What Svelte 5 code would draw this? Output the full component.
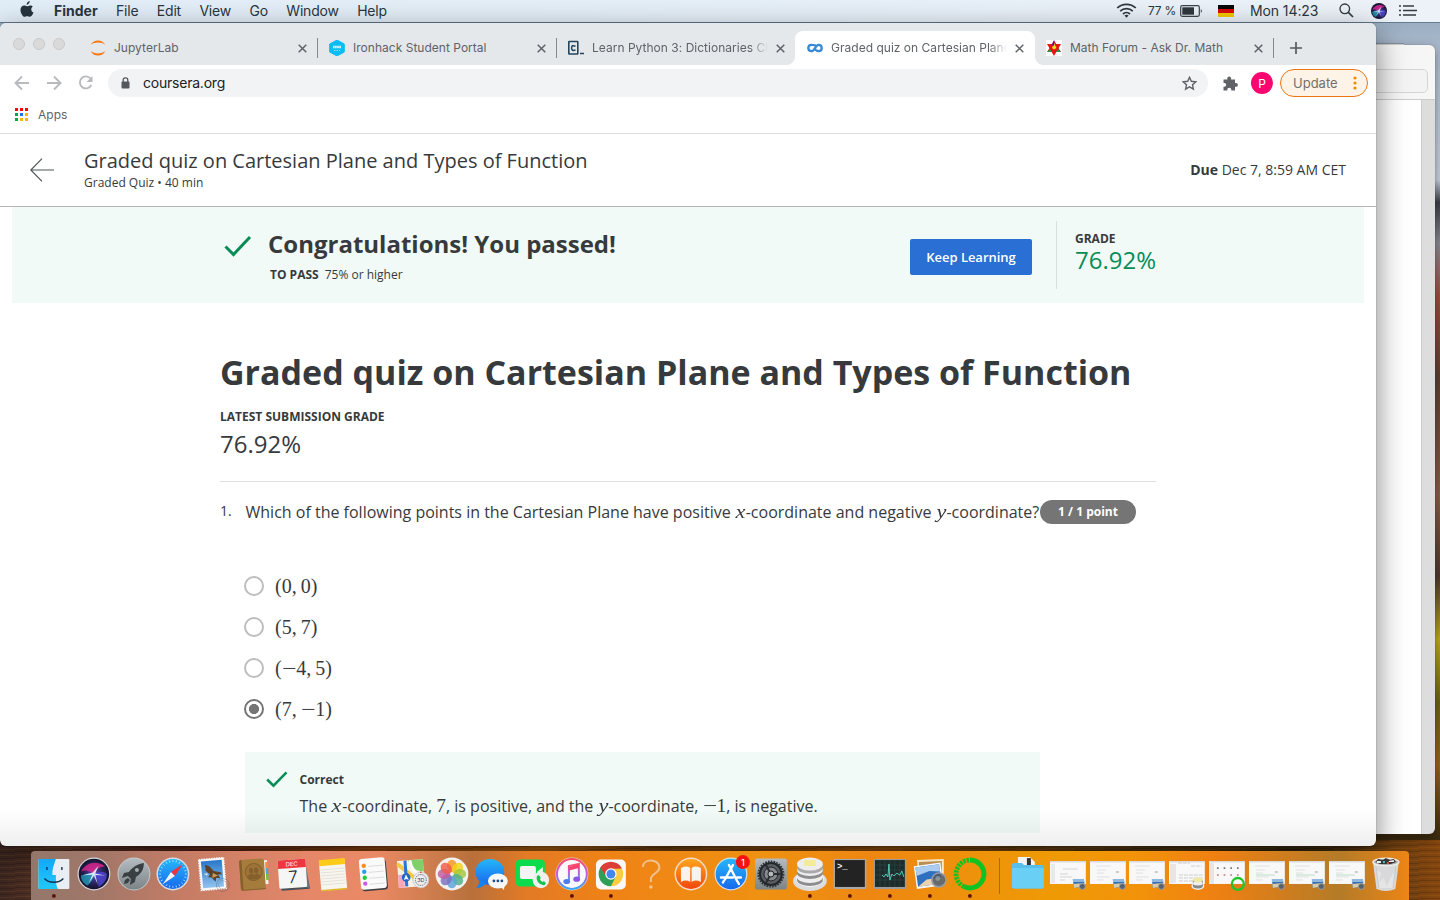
<script>
  const menus = ['File', 'Edit', 'View', 'Go', 'Window', 'Help'];
  const tabs = [
    { icon: 'jupyter', title: 'JupyterLab', sep: true },
    { icon: 'iron', title: 'Ironhack Student Portal', sep: true },
    { icon: 'code', title: 'Learn Python 3: Dictionaries Ch', fade: true },
    { icon: 'coursera', title: 'Graded quiz on Cartesian Plane', fade: true, active: true },
    { icon: 'math', title: 'Math Forum - Ask Dr. Math', sep: true }
  ];
  const options = [
    { x: '0', y: '0' },
    { x: '5', y: '7' },
    { x: '4', y: '5', negX: true },
    { x: '7', y: '1', negY: true, checked: true }
  ];
  const apps = [
    ['finder', 1], ['siri', 0], ['launchpad', 0], ['safari', 0], ['mail', 0], ['contacts', 0],
    ['calendar', 0], ['notes', 0], ['reminders', 0], ['maps', 0], ['photos', 0], ['messages', 0],
    ['facetime', 0], ['itunes', 1], ['chrome', 1], ['missing', 0], ['books', 0], ['appstore', 0],
    ['settings', 0], ['sequel', 1], ['terminal', 1], ['activity', 1], ['preview', 1], ['ring', 1]
  ];
  const places = ['folder', 'w1', 'w2', 'w3', 'w4', 'w5', 'w6', 'w7', 'w8', 'trash'];
  const petals = ['#f7941d', '#f4d313', '#a5c73b', '#4fb08a', '#5ba3d9', '#7d6fc0', '#c25ba0', '#ee5a4a'];
  const ticks = Array.from({ length: 24 }, (_, i) => i * 15);
  const swatches = ['#f00', '#f00', '#f00', '#00a651', '#1a73e8', '#fbb400', '#00a651', '#fbb400', '#fbb400'];
</script>

{#snippet siriOrb(r)}
  <circle {r} fill="url(#siriBase)" />
  <path d="M-.85-.15C-.5-.8 .2-.9 .75-.5C.3-.5 .1-.2 0 0C-.3-.2-.6-.3-.85-.15Z" fill="#f0268f" opacity=".75" transform="scale({r})" />
  <path d="M-.85 .1C-.5 .0-.2 0 0 0C0 .3-.3 .7-.45 .75C-.7 .6-.85 .4-.85 .1Z" fill="#1fb7c9" opacity=".65" transform="scale({r})" />
  <path d="M0 0C.3-.15 .7-.2 .85 0C.85 .4 .6 .7 .3 .85C.3 .5 .2 .2 0 0Z" fill="#5046d8" opacity=".8" transform="scale({r})" />
  <path d="M-.75 .08L-.08-.1L.3-.55L.09-.03L.75 .1L.1 .07L.26 .7L0 .12L-.35 .6L-.1 .05Z" fill="#eafcff" opacity=".85" transform="scale({r})" />
{/snippet}

{#snippet previewBadge()}
  <path d="M5 5H16L17 12L6 14Z" fill="#3b6fb0" /><path d="M5.500 10L17 9V12L6 14Z" fill="#d9cba8" /><path d="M5 5H16L16.500 8L5 8Z" fill="#8fb8e0" />
  <circle cx="14.500" cy="12.500" r="3" fill="#59626b" stroke="#9aa0a8" stroke-width="1" />
{/snippet}

{#snippet dockIcon(name)}
  {#if name === 'finder'}
    <rect x="-15.5" y="-15" width="31" height="30" rx="1" fill="#e9eef5" />
    <path d="M-15.5-15H2C0-9-2-4-1.500 1H2V6C2 10 3 13 4 15H-15.500Z" fill="url(#finderBlue)" />
    <path d="M-7-7V-4M8-7V-4" stroke="#12324c" stroke-width="1.400" />
    <path d="M-9.500 4.500C-5 9.500 5 9.500 9.500 4.500" fill="none" stroke="#12324c" stroke-width="1.400" />
  {:else if name === 'siri'}
    <circle r="16.500" fill="#d8d8dc" />
    {@render siriOrb(15.3)}
  {:else if name === 'launchpad'}
    <circle r="16.500" fill="#c3c9cb" /><circle r="15.500" fill="url(#steel)" />
    <path d="M10-11C3-10-2-6-5-2L-10-1L-12 4L-6 2L-3 5L-4 11L1 8L2 3C7 0 10-4 10-11Z" fill="#3a3f42" />
    <circle cx="3" cy="-4" r="2" fill="#a5adb0" /><path d="M-6 4L-9 6L-10 10L-6 9L-4 6Z" fill="#3a3f42" />
  {:else if name === 'safari'}
    <circle r="16.500" fill="#d9dde0" /><circle r="15" fill="url(#blueDown)" />
    {#each ticks as t}<path d="M0-14V-12" stroke="#d8efff" stroke-width=".7" transform="rotate({t})" />{/each}
    <path d="M10-10L2 2L-2-2Z" fill="#f0303c" /><path d="M-10 10L2 2L-2-2Z" fill="#f3f3f3" />
  {:else if name === 'mail'}
    <g transform="rotate(-5)"><rect x="-13" y="-15.500" width="25" height="31" fill="#f8f8f8" stroke="#f8f8f8" stroke-width="1.500" stroke-dasharray="1.500 1" /><rect x="-11" y="-13.500" width="21" height="27" fill="url(#mailSky)" />
      <path d="M-7-10L-3-8L1-3L8-1L9 1L5 1L7 5L3 4L2 8L-2 3L-5 3L-3 0L-7-4Z" fill="#5c4028" /><path d="M0-1L5 2L-1 4Z" fill="#c99a55" /><path d="M-9-1L-5-1L-6 1Z" fill="#f4efe2" /></g>
    <circle cx="10" cy="11" r="6.500" fill="none" stroke="#4b4b55" stroke-width=".7" opacity=".45" /><circle cx="10" cy="11" r="4.300" fill="none" stroke="#4b4b55" stroke-width=".6" opacity=".4" />
  {:else if name === 'contacts'}
    <g transform="rotate(-4)"><path d="M10-13H15V11H10Z" fill="#f2efe4" /><path d="M13-11H15.500V-5H13Z" fill="#f08a3c" /><path d="M13-5H15.500V1H13Z" fill="#46a6d8" /><path d="M13 1H15.500V7H13Z" fill="#6fbf4b" />
      <rect x="-13" y="-15" width="25" height="31" rx="2" fill="#a67c3d" /><path d="M-13-13V14Q-13 16-11 16H12V15H-10.500V-15H-11Q-13-15-13-13Z" fill="#86602c" />
      <circle cx="1" cy="-2" r="8.500" fill="#9d7438" stroke="#86602c" /><ellipse cx="-1.500" cy="-3.500" rx="2.200" ry="3" fill="#86602c" /><ellipse cx="3.500" cy="-3.500" rx="2.200" ry="3" fill="#86602c" /><path d="M-6 3Q-5 0-1.500 0T1.500 2Q1.500 0 4 0T8 3L5 5.500H-3Z" fill="#86602c" /></g>
  {:else if name === 'calendar'}
    <g transform="rotate(-4)"><path d="M-14 12L-12 16H16L15 8Z" fill="#4c5056" /><path d="M13-13L16 15H13Z" fill="#6b7078" /><rect x="-14.500" y="-14.500" width="28" height="28.500" rx="1.500" fill="#f6f6f6" /><path d="M-14.500-6V-13Q-14.500-14.500-13-14.500H12Q13.500-14.500 13.500-13V-6Z" fill="#ee3640" />
      <text x="-.5" y="-8" font-size="6" fill="#fff" text-anchor="middle">DEC</text><text x="0" y="9" font-size="17" fill="#222" text-anchor="middle" font-weight="300">7</text></g>
  {:else if name === 'notes'}
    <g transform="rotate(-5)"><rect x="-13" y="-14" width="26" height="30" rx="1" fill="#f7f5ee" /><path d="M-13-15H13V-9H-13Z" fill="#fccb18" /><path d="M-12-5H12M-12-2H12M-12 1H12M-12 4H12M-12 7H12M-12 10H12" stroke="#d8d5cc" stroke-width=".6" /><path d="M-13 15H13V16.500H-13Z" fill="#e3b62b" /></g>
  {:else if name === 'reminders'}
    <g transform="rotate(-5)"><rect x="-12" y="-14" width="26" height="30.500" rx="3" fill="#3e3e40" /><rect x="-13" y="-16" width="26" height="31" rx="3" fill="#fafafa" />
      <circle cx="-8.500" cy="-9" r="2.200" fill="#ff8a1c" /><circle cx="-8.500" cy="-3" r="2.200" fill="#2c9cf2" /><circle cx="-8.500" cy="3" r="2.200" fill="#23cc3b" /><circle cx="-8.500" cy="9" r="2.200" fill="#c95be0" />
      <path d="M-4-8H11M-4-2H11M-4 4H11M-4 10H11" stroke="#c9c9c9" stroke-width=".6" /></g>
  {:else if name === 'maps'}
    <g transform="rotate(-4)"><path d="M-14-14H12V13H-14Z" fill="#f5f1e4" /><path d="M-3-14H12V-2C5-2 0-6-3-14Z" fill="#7fcf6b" /><path d="M-14 0H-8V13H-14Z" fill="#f5a7be" /><path d="M-14-11L12 13" stroke="#f8c83e" stroke-width="4" /><path d="M-1-14C0-4 5 1 12 3" fill="none" stroke="#fff" stroke-width="2.500" /><path d="M-6-14V12" stroke="#2b73d9" stroke-width="3" /><circle cx="-6" cy="3" r="4.300" fill="#2264c8" /><path d="M-6 0L-3.500 5.500L-6 4.500L-8.500 5.500Z" fill="#fff" /></g>
    <circle cx="9" cy="6" r="8" fill="#ececec" stroke="#bbb" stroke-width=".6" /><circle cx="9" cy="6" r="5.500" fill="none" stroke="#557" stroke-dasharray="1 1" /><text x="9" y="8" font-size="5.500" text-anchor="middle" fill="#444">3D</text><path d="M8-1L9-3L10-1Z" fill="#e33" />
  {:else if name === 'photos'}
    <circle r="16.500" fill="#f2f2f0" />
    {#each petals as c, i}<ellipse cx="0" cy="-8" rx="5" ry="6.300" fill={c} opacity=".82" transform="rotate({i * 45})" />{/each}
  {:else if name === 'messages'}
    <ellipse cx="-2" cy="-2" rx="14.500" ry="13" fill="url(#blueDown)" /><path d="M-13 5Q-12 11-16 14Q-9 14-6 9Z" fill="#1483ef" />
    <ellipse cx="6" cy="7" rx="10" ry="7.500" fill="#f7f7f7" /><path d="M8 12L12 16L13 10Z" fill="#f7f7f7" /><circle cx="2" cy="7" r="1.400" fill="#1c4f8c" /><circle cx="6" cy="7" r="1.400" fill="#1c4f8c" /><circle cx="10" cy="7" r="1.400" fill="#1c4f8c" />
  {:else if name === 'facetime'}
    <rect x="-16" y="-14.500" width="29" height="27" rx="4" fill="#0bdc4d" /><rect x="-12" y="-8" width="16" height="13" rx="2" fill="#f4f4f4" /><path d="M5-2L11-7V5Z" fill="#e8f8e8" />
    <circle cx="9" cy="6" r="8.300" fill="#f0f0f0" /><path d="M5 2L7 1L9 4L8 5Q9 8 11 8L12 7L14 9L13 11Q9 12 6 8Q4 5 5 2Z" fill="#17c34a" />
  {:else if name === 'itunes'}
    <circle r="16.500" fill="#ddd" /><circle r="15" fill="#fbf8fb" stroke="url(#rainbow)" stroke-width="2" />
    <path d="M-3 7V-8L7-10V5" fill="none" stroke="url(#rainbow)" stroke-width="2" /><path d="M-3-7L7-9.500V-6L-3-3.500Z" fill="#f4426c" /><ellipse cx="-5.200" cy="7.500" rx="3.400" ry="2.600" fill="#4f7cf0" /><ellipse cx="4.800" cy="5.200" rx="3.400" ry="2.600" fill="#8d55e4" />
  {:else if name === 'chrome'}
    <rect x="-15" y="-14.500" width="30" height="30" rx="5" fill="#f8f8f8" />
    <path d="M0 0L-10.700-6.200A12.400 12.400 0 0 1 10.700-6.200Z" fill="#dc3f37" /><path d="M0 0L10.700-6.200A12.400 12.400 0 0 1 0 12.400Z" fill="#fccc3f" /><path d="M0 0V12.400A12.400 12.400 0 0 1-10.700-6.200Z" fill="#2f9e58" /><path d="M0-5.600H11L10.700-6.200L4.800 2.800L0 12.400Z" fill="#fccc3f" /><path d="M-10.700-6.200L-4.800 2.800L4.800 2.800L0 12.400Z" fill="#2f9e58" /><path d="M-10.700-6.200L-5 2L0-5.600H11L7-10H-7Z" fill="#dc3f37" /><circle r="5.700" fill="#fff" /><circle r="4.500" fill="#4386f0" />
  {:else if name === 'missing'}
    <path d="M-8-7C-8-11-4.500-13.500 0-13.500S8.500-11 8.500-6.500C8.500-1 0 0 0 5V8" fill="none" stroke="#f1c391" stroke-width="2" /><circle cy="13" r="1.700" fill="#f1c391" />
  {:else if name === 'books'}
    <circle r="16.500" fill="#f3dcc6" /><circle r="15" fill="url(#orangeDown)" /><path d="M-10-6Q-4-9-.7-6V8Q-5 5-10 8ZM10-6Q4-9 .7-6V8Q5 5 10 8Z" fill="#f7f3ee" />
  {:else if name === 'appstore'}
    <circle r="16.500" fill="#cfe1f3" /><circle r="15.300" fill="url(#blueDown)" />
    <path d="M-2-9L6.500 7.500M2-9L-6 5.500M-10 3.500H2M6 3.500H10M-7.200 7L-8 8.500M7 8L8 10" stroke="#fff" stroke-width="2.400" stroke-linecap="round" />
    <circle cx="12" cy="-12" r="7" fill="#f31313" /><text x="12" y="-8.500" font-size="9.500" fill="#fff" text-anchor="middle">1</text>
  {:else if name === 'settings'}
    <rect x="-16" y="-15.500" width="32" height="31" rx="2" fill="url(#steel)" /><circle r="12.600" fill="none" stroke="#303438" stroke-width="2" stroke-dasharray="1.700 1.100" /><circle r="11" fill="#5a5e62" stroke="#25282b" stroke-width="2" /><circle r="7" fill="#84898d" stroke="#222" /><path d="M0 0L10 0M0 0L-5-9M0 0L-5 9" stroke="#2b2e31" stroke-width="2" /><circle r="3" fill="#b4b8ba" stroke="#222" />
  {:else if name === 'sequel'}
    <ellipse cy="7" rx="17" ry="10" fill="#dcdcdc" /><ellipse cy="5" rx="14" ry="8" fill="#fafafa" />
    <path d="M-13 3V6A13 6 0 0 0 13 6V3Z" fill="#8d8d90" /><ellipse cy="3" rx="13" ry="6" fill="#eee" /><path d="M-13-4V-1A13 6 0 0 0 13-1V-4Z" fill="#8d8d90" /><ellipse cy="-4" rx="13" ry="6" fill="#eee" /><path d="M-13-10V-6A13 5.500 0 0 0 13-6V-10Z" fill="#a9a9ac" /><ellipse cy="-10" rx="13" ry="6.500" fill="#ededed" /><path d="M-6-14H6V-8H-6Z" fill="#f2eb9a" />
  {:else if name === 'terminal'}
    <rect x="-16.500" y="-15" width="33" height="30" rx="1.500" fill="#a8a8a8" /><rect x="-15" y="-14" width="30" height="27" fill="#232323" /><text x="-13" y="-5" font-size="9" font-weight="700" fill="#eee" class="mono">&gt;_</text>
  {:else if name === 'activity'}
    <rect x="-16.500" y="-15" width="33" height="30" rx="1.500" fill="#9b9b9b" /><rect x="-15" y="-14" width="30" height="27" fill="#1d2b2b" /><path d="M-10-14V13M-5-14V13M0-14V13M5-14V13M10-14V13M-15-9H15M-15-4H15M-15 1H15M-15 6H15" stroke="#2f4a47" stroke-width=".6" /><path d="M-8 1L-6 3L-4 0L-2 3L-1-10L0 6L2 0L4 2L7-1L10 1L12-3L14 3" fill="none" stroke="#53d9c0" stroke-width=".9" />
  {:else if name === 'preview'}
    <path d="M-13-14L14-15V8L-10 12Z" fill="#f5e9c9" /><path d="M-11-12L12-13V0H-11Z" fill="#b98e50" /><g transform="rotate(-8)"><rect x="-15" y="-10" width="27" height="23" fill="#f8f8f8" /><path d="M-13.500-8.500H10.500V11H-13.500Z" fill="#2f6fc0" /><path d="M-13.500-8.500H10.500V-1L0-3L-13.500 0Z" fill="#a9ccf0" /><path d="M-13.500 11L-4 5L10.500 5V11Z" fill="#e7d3ad" /></g><circle cx="9" cy="6" r="7" fill="#4f575f" fill-opacity=".85" stroke="#969ca3" stroke-width="1.600" /><circle cx="8" cy="4.500" r="2.500" fill="#c7d4df" opacity=".4" />
  {:else if name === 'ring'}
    <path d="M0-14A14 14 0 1 1-6 12.600" fill="none" stroke="#10c322" stroke-width="5" /><path d="M-6 12.600A14 14 0 0 1 0-14" fill="none" stroke="#10c322" stroke-width="4.800" stroke-dasharray="2.400 1" />
  {:else if name === 'folder'}
    <path d="M-10-17H2L7-12V4H-10Z" fill="#f3f3f3" /><path d="M-1-16H3V-9H-1Z" fill="#333" /><path d="M-16-9Q-16-11-14-11H-6L-4-9H14Q16-9 16-7V13Q16 14.500 14 14.500H-14Q-16 14.500-16 13Z" fill="#58bfeb" /><path d="M-16-6H16V13Q16 14.500 14 14.500H-14Q-16 14.500-16 13Z" fill="#6acff5" />
  {:else if name === 'trash'}
    <path d="M-13-12H13L9.500 15Q0 19-9.500 15Z" fill="#d9d9db" /><path d="M-9-4L-5-1L-7 8L-2 4L1 12L5 3L9-3L7 14H-7Z" fill="#e9e9ea" opacity=".7" /><path d="M-10-7L-7 14M10-7L7 14" stroke="#c5c5c8" stroke-width=".8" /><ellipse cy="-12" rx="13" ry="3.800" fill="#aaa" stroke="#ededed" stroke-width="1.500" /><path d="M-10-12L-8-15L-3-14L0-16L4-14L8-15L10-12L5-10H-6Z" fill="#3b3533" /><path d="M-9-13H-5V-11H-9ZM3-13L8-14V-12H3Z" fill="#e9f1f2" /><path d="M-3-13H-1V-11H-3Z" fill="#47c3cd" /><path d="M1-12H3V-10H1Z" fill="#c9584b" />
  {:else}
    <rect x="-18" y="-13" width="36" height="23" fill="#f8f8f8" /><path d="M-18-13H18V-11.500H-18Z" fill="#d9dbdc" />
    {#if name === 'w1'}
      <path d="M-17-10H-13V9H-17Z" fill="#e9e9e9" /><path d="M-5-5H10M-8 0H0M-8 3H4M-8 6H-3" stroke="#bbb" stroke-width=".6" />{@render previewBadge()}
    {:else if name === 'w4'}
      <path d="M-17-10H-11V9H-17Z" fill="#e6e6e6" /><path d="M-9-11H3M-8 1H16M-8 4H16M-8 7H6M4-8H15" stroke="#bbb" stroke-width=".7" stroke-dasharray="4 1" /><ellipse cx="11" cy="12" rx="6.500" ry="4" fill="#eee" /><path d="M6 6V12A5 2.500 0 0 0 16 12V6Z" fill="#888" /><ellipse cx="11" cy="9.500" rx="5" ry="2" fill="#eee" /><ellipse cx="11" cy="6" rx="5" ry="2.500" fill="#efe9a6" />
    {:else if name === 'w5'}
      <path d="M-18-11H-13V10H-18Z" fill="#e5e5e5" /><path d="M-10-6H14" stroke="#777" stroke-width="1.700" stroke-dasharray="1.700 5" /><path d="M-10 1H14" stroke="#b77" stroke-width="1.700" stroke-dasharray="1.700 5" /><circle cx="11" cy="10" r="6" fill="none" stroke="#20c52c" stroke-width="2.300" />
    {:else}
      <path d="M-12-8H3M-11-4H-2M-11-1H-4M-11 3H2M-11 6H-4" stroke="#d2d2d2" stroke-width=".6" />{#if name > 'w5'}<path d="M-11 1H8" stroke="#b9e0ca" stroke-width="1" />{/if}<path d="M8-2H11" stroke="#888" stroke-width=".8" />{@render previewBadge()}
    {/if}
  {/if}
{/snippet}

{#snippet minus()}<span class="minus">−</span>{/snippet}

<svg class="defs" width="0" height="0" aria-hidden="true">
  <defs>
    <linearGradient id="finderBlue" x2="0" y2="1"><stop stop-color="#12a8fb" /><stop offset="1" stop-color="#22c8f8" /></linearGradient>
    <linearGradient id="blueDown" x2="0" y2="1"><stop stop-color="#25b6fb" /><stop offset="1" stop-color="#1769ec" /></linearGradient>
    <linearGradient id="steel" x2="0" y2="1"><stop stop-color="#b4bcc2" /><stop offset="1" stop-color="#7c8488" /></linearGradient>
    <linearGradient id="mailSky" x2="0" y2="1"><stop stop-color="#2a78c9" /><stop offset="1" stop-color="#8fc4ef" /></linearGradient>
    <linearGradient id="orangeDown" x2="0" y2="1"><stop stop-color="#fda51c" /><stop offset="1" stop-color="#f2470c" /></linearGradient>
    <linearGradient id="rainbow" x2="0" y2="1"><stop stop-color="#fb4a62" /><stop offset=".5" stop-color="#c45be6" /><stop offset="1" stop-color="#35a7f3" /></linearGradient>
    <radialGradient id="siriBase"><stop stop-color="#5a4fc0" /><stop offset=".6" stop-color="#2b2560" /><stop offset="1" stop-color="#14132b" /></radialGradient>
  </defs>
</svg>

<div class="desktop">
  <header class="menubar">
    <svg class="apple" width="14" height="17" viewBox="0 0 14 17"><path d="M9.700 0C9.800 1.900 8.200 3.700 6.700 3.700C6.500 2 8.100.200 9.700 0ZM12.900 5.600C11.800 6.300 11.300 7.300 11.300 8.400C11.300 9.900 12.200 11 13.500 11.500C13 13 11.500 15.800 9.900 15.800C8.900 15.800 8.500 15.200 7.200 15.200C6 15.200 5.500 15.800 4.600 15.800C2.800 15.800.500 12 .500 8.900C.500 6.100 2.200 4.500 4.100 4.500C5.300 4.500 6.200 5.200 7 5.200C7.700 5.200 8.900 4.400 10.300 4.400C11.300 4.400 12.300 4.900 12.900 5.600Z" fill="#26343d" /></svg>
    <b class="finder">Finder</b>
    <nav class="menus">{#each menus as m}<span>{m}</span>{/each}</nav>
    <div class="status">
      <svg class="wifi" width="21" height="15" viewBox="0 0 21 15"><path d="M1.200 5C6.400.200 14.600.200 19.800 5M4.200 8.100C7.700 4.900 13.300 4.900 16.800 8.100M7 11C9 9.200 12 9.200 14 11" fill="none" stroke="#2f373e" stroke-width="1.700" /><path d="M8.500 12.600Q10.500 11 12.500 12.600L10.500 14.800Z" fill="#2f373e" /></svg>
      <span class="pct">77 %</span>
      <svg class="battery" width="23" height="12" viewBox="0 0 23 12"><rect x=".7" y=".7" width="18.600" height="10.600" rx="1.500" fill="none" stroke="#3a4248" stroke-width="1.200" /><path d="M2.300 2.300H14V9.700H2.300Z" fill="#30383e" /><path d="M20.800 4Q23 6 20.800 8Z" fill="#3a4248" /></svg>
      <svg class="flag" width="16" height="12" viewBox="0 0 16 12"><path d="M0 0H16V4H0Z" fill="#080808" /><path d="M0 4H16V8H0Z" fill="#d80909" /><path d="M0 8H16V12H0Z" fill="#f2c500" /></svg>
      <span class="clock">Mon 14:23</span>
      <svg class="search" width="15" height="15" viewBox="0 0 15 15"><circle cx="5.800" cy="5.800" r="4.800" fill="none" stroke="#333b42" stroke-width="1.300" /><path d="M9.300 9.300L14 14" stroke="#333b42" stroke-width="1.700" /></svg>
      <svg class="siri" width="16" height="16" viewBox="-8 -8 16 16">{@render siriOrb(8)}</svg>
      <svg class="list" width="18" height="11" viewBox="0 0 18 11"><path d="M0 1H2M0 5.500H2M0 10H2M4 1H15M4 5.500H18M4 10H17" stroke="#343b41" stroke-width="1.700" /></svg>
    </div>
  </header>

  <div class="back-edge"></div>
  <section class="backwin">
    <div class="backbar"><div class="backfield"></div></div>
    <div class="backbody"></div>
  </section>

  <main class="window">
    <div class="tabstrip">
      <div class="lights"><i></i><i></i><i></i></div>
      {#each tabs as t}
        <div class="tab" class:active={t.active} class:sep={t.sep}>
          <svg class="fav" width="16" height="16" viewBox="0 0 16 16">
            {#if t.icon === 'jupyter'}
              <path d="M.8 5C3-1 13-1 15.200 5C12 1.800 4 1.800 .8 5ZM.8 11C3 17 13 17 15.200 11C12 14.200 4 14.200 .8 11Z" fill="#f9750f" />
            {:else if t.icon === 'iron'}
              <path d="M8 0L15.300 4V12L8 16L.700 12V4Z" fill="#0bbdf5" stroke="#0bbdf5" stroke-linejoin="round" /><path d="M4 7H12" stroke="#e6f9ff" stroke-width="2.500" stroke-dasharray="1.600 .5" /><path d="M5 10.500H11" stroke="#8fe0fa" stroke-dasharray="1.500 1" />
            {:else if t.icon === 'code'}
              <rect x=".8" y="1.500" width="9" height="12.500" rx=".5" fill="none" stroke="#24435c" stroke-width="1.600" /><path d="M7.500 6.200Q3.600 4.500 3.600 8T7.500 10" fill="none" stroke="#24435c" stroke-width="1.500" /><path d="M12 13.500H16" stroke="#24435c" stroke-width="1.500" />
            {:else if t.icon === 'coursera'}
              <path d="M10 6.400C8.500 4.900 6.800 4.800 4.700 4.800C2.600 4.800 1.300 6.200 1.300 8S2.600 11.200 4.700 11.200C7.500 11.200 8.500 4.800 11.500 4.800C13.500 4.800 14.700 6.200 14.700 8S13.500 11.200 11.500 11.200C9.800 11.200 8.500 10.200 7.300 8" fill="none" stroke="#3888d4" stroke-width="2.300" />
            {:else}
              <path d="M0 0H16V16H0Z" fill="#fff" /><path d="M8 0L11 6L8 8L5 6Z" fill="#5a1ec0" /><path d="M1 4H15L8 16Z" fill="#ee1414" /><path d="M8 1L15 12H9ZM8 1L1 12L7 12Z" fill="#e91212" /><path d="M8 3L10.500 8L8 9.500L6 8Z" fill="#eedc24" /><path d="M8 1L6 5L8 6Z" fill="#2a1ed0" /><path d="M1 12L4 9L6 12ZM15 12L12 9L10 12Z" fill="#189d4a" />
            {/if}
          </svg>
          <span class="title" class:fade={t.fade}>{t.title}</span>
          <svg class="x" width="9" height="9" viewBox="0 0 9 9"><path d="M.7.7L8.300 8.300M8.300.7L.7 8.300" stroke="#5f6368" stroke-width="1.500" /></svg>
        </div>
      {/each}
      <svg class="plus" width="12" height="12" viewBox="0 0 12 12"><path d="M6 0V12M0 6H12" stroke="#55595d" stroke-width="1.700" /></svg>
    </div>

    <div class="toolbar">
      <svg class="nav" width="84" height="16" viewBox="0 0 84 16"><g fill="none" stroke="#b8babd" stroke-width="1.900"><path d="M15 8H2M8 1.500L1.500 8L8 14.500" /><path d="M33 8H46M40 1.500L46.500 8L40 14.500" /><path d="M76.500 3.500A6 6 0 1 0 77.300 10" /></g><path d="M78.500 1V7H72.500Z" fill="#b8babd" /></svg>
      <div class="omnibox">
        <svg width="9" height="12" viewBox="0 0 9 12"><rect x=".5" y="4.500" width="8" height="7" rx="1" fill="#55595d" /><path d="M2.200 5V3Q2.200.900 4.500.900T6.800 3V5" fill="none" stroke="#55595d" stroke-width="1.300" /></svg>
        <span>coursera.org</span>
        <svg class="star" width="15" height="15" viewBox="0 0 15 15"><path d="M7.500 1.300L9.300 5.300L13.800 5.800L10.500 8.800L11.400 13.200L7.500 10.900L3.600 13.200L4.500 8.800L1.200 5.800L5.700 5.300Z" fill="none" stroke="#5f6368" stroke-width="1.400" /></svg>
      </div>
      <svg class="puzzle" width="15" height="15" viewBox="0 0 15 15"><path d="M.5 3.500H4.300V2.500A1.900 1.900 0 0 1 8.100 2.500V3.500H12V7H13A1.900 1.900 0 0 1 13 10.800H12V14.500H8.300V13.700A2 2 0 0 0 4.300 13.700V14.500H.500V10.700H1.300A1.900 1.900 0 0 0 1.300 6.900H.5Z" fill="#5f6368" /></svg>
      <span class="avatar">P</span>
      <div class="update">Update<svg width="4" height="14" viewBox="0 0 4 14"><circle cx="2" cy="2" r="1.600" fill="#f28b00" /><circle cx="2" cy="7" r="1.600" fill="#f28b00" /><circle cx="2" cy="12" r="1.600" fill="#f28b00" /></svg></div>
    </div>
    <div class="bookmarks">
      <div class="grid">{#each swatches as c}<i style="background:{c}"></i>{/each}</div>Apps
    </div>

    <div class="quizbar">
      <svg width="24" height="24" viewBox="0 0 24 24"><path d="M.8 12H24M12 .700L.800 12L12 23.300" fill="none" stroke="#50565c" stroke-width="1.200" /></svg>
      <div class="names"><span class="name">Graded quiz on Cartesian Plane and Types of Function</span><span class="meta">Graded Quiz • 40 min</span></div>
      <span class="due"><b>Due</b> Dec 7, 8:59 AM CET</span>
    </div>

    <div class="banner">
      <svg width="28" height="22" viewBox="0 0 28 22"><path d="M1.500 11.500L9.500 19.500L26 2" fill="none" stroke="#088c56" stroke-width="3" /></svg>
      <div class="congrats"><strong>Congratulations! You passed!</strong><span><b>TO PASS</b>75% or higher</span></div>
      <button>Keep Learning</button>
      <div class="grade"><b>GRADE</b><span>76.92%</span></div>
    </div>

    <article>
      <h1>Graded quiz on Cartesian Plane and Types of Function</h1>
      <div class="latest">LATEST SUBMISSION GRADE</div>
      <div class="score">76.92%</div>
      <div class="question">
        <span class="num">1.</span>
        <span class="prompt">Which of the following points in the Cartesian Plane have positive <i class="var">x</i>-coordinate and negative <i class="var">y</i>-coordinate?</span>
        <span class="points">1 / 1 point</span>
      </div>
      <div class="options">
        {#each options as o}
          <div class="option"><i class="radio" class:checked={o.checked}></i><span class="math"><span>({#if o.negX}{@render minus()}{/if}{o.x},</span><span>{#if o.negY}{@render minus()}{/if}{o.y})</span></span></div>
        {/each}
      </div>
      <div class="feedback">
        <svg width="22" height="17" viewBox="0 0 22 17"><path d="M1.200 8.500L7.500 14.700L20.500 1.300" fill="none" stroke="#088c56" stroke-width="2.500" /></svg>
        <div><b>Correct</b><p>The <i class="var">x</i>-coordinate, <span class="n">7</span>, is positive, and the <i class="var">y</i>-coordinate, <span class="n">{@render minus()}1</span>, is negative.</p></div>
      </div>
    </article>
    <div class="shade"></div>
  </main>

  <footer class="dock">
    {#each apps as [name, running]}
      <svg class="cell" viewBox="-20 -23 40 49">{@render dockIcon(name)}{#if running}<circle cy="22" r="1.900" fill="#5a1206" />{/if}</svg>
    {/each}
    <div class="divider"></div>
    {#each places as name}
      <svg class="cell" viewBox="-20 -23 40 49">{@render dockIcon(name)}</svg>
    {/each}
  </footer>
</div>

<style>
  :global(body) { margin: 0; overflow: hidden; }
  * { box-sizing: border-box; }
  svg { display: block; flex: none; }
  .defs { position: absolute; }
  .desktop {
    position: relative; width: 1440px; height: 900px; overflow: hidden; font-family: Inter, sans-serif;
    background:
      repeating-linear-gradient(178deg, rgba(0,0,0,.16) 0 1px, transparent 1px 3px, rgba(255,160,40,.08) 3px 4px, transparent 4px 6px) 0 840px / 100% 60px no-repeat,
      linear-gradient(90deg, #3b2620 0, #5a3526 4%, #4c2018 12%, #8a4210 26%, #a45b10 38%, #6f3d10 46%, #8d4b0c 60%, #5c3a10 75%, #33280f 90%, #85460f 100%) 0 840px / 100% 60px no-repeat,
      linear-gradient(180deg, #8fa5bb 0, #b6c3d3 8%, #c9d2df 20%, #3c3f48 22.500%, #8b8b94 27%, #a14b40 33%, #5c4034 42%, #8a5d48 55%, #4e392f 64%, #bfae16 71%, #6a6512 78%, #9b6419 85%, #3e2c10 93%);
  }
  .menubar { height: 23px; display: flex; align-items: center; padding: 0 23px 1px 20px; font-size: 14px; color: #2b363e; background: linear-gradient(90deg, #e1edf7, #e6eff8 60%, #edf2f8); border-bottom: 1px solid #647d92; }
  .apple { margin-top: -2px; }
  .finder { margin-left: 20px; width: 44px; letter-spacing: 0; }
  .menus { display: flex; gap: 18.500px; margin-left: 18px; letter-spacing: -.22px; }
  .status { margin-left: auto; display: flex; align-items: center; }
  .pct { font-size: 12px; margin-left: 11px; width: 32px; letter-spacing: -.2px; white-space: nowrap; }
  .flag { margin-left: 15px; }
  .clock { margin-left: 16px; width: 69px; white-space: nowrap; letter-spacing: -.1px; }
  .search { margin-left: 20px; }
  .siri { margin-left: 17px; }
  .list { margin-left: 12px; }

  .back-edge { position: absolute; left: 1370px; top: 43px; width: 34px; height: 8px; border-top: 1px solid #8a98a6; background: #eee; }
  .backwin { position: absolute; left: 1200px; top: 45px; width: 235px; height: 789px; border-radius: 6px; background: #ddd; overflow: hidden; box-shadow: 0 0 1px #555, 0 4px 12px rgba(0,0,0,.4); }
  .backbar { height: 55px; background: #f6f6f6; border-bottom: 1px solid #ccc; padding: 24px 7px 0 0; }
  .backfield { height: 24px; border: 1px solid #d5d5d5; border-radius: 5px; background: #f3f3f3; }
  .backbody { height: 734px; width: 222px; background: #fff; border-right: 1px solid #ccc; }

  .window { position: absolute; left: 0; top: 23px; width: 1376px; height: 823px; background: #fff; border-radius: 6px; overflow: hidden; box-shadow: 0 0 1px rgba(0,0,0,.7), 0 10px 30px rgba(0,0,0,.5); }
  .tabstrip { display: flex; height: 42px; background: #e4e8eb; align-items: flex-end; }
  .lights { display: flex; gap: 8px; width: 78px; padding-left: 13px; align-self: flex-start; padding-top: 15px; }
  .lights i { width: 12px; height: 12px; border-radius: 50%; background: #dadada; border: 1px solid #c9c9c9; }
  .tab { position: relative; width: 239px; height: 34px; display: flex; align-items: center; padding: 0 8px 0 12px; font-size: 12px; color: #5f6368; }
  .tab.sep:after { content: ''; position: absolute; right: -1px; top: 7px; height: 20px; width: 1px; background: #85898d; }
  .tab.active { background: #fff; border-radius: 8px 8px 0 0; width: 240px; margin-right: -1px; }
  .tab.active:before, .tab.active:after { content: ''; position: absolute; bottom: 0; width: 8px; height: 8px; }
  .tab.active:before { left: -8px; background: radial-gradient(circle at 0 0, transparent 7.500px, #fff 8px); }
  .tab.active:after { right: -8px; background: radial-gradient(circle at 100% 0, transparent 7.500px, #fff 8px); }
  .title { margin-left: 8px; width: 176px; flex: none; overflow: hidden; white-space: nowrap; line-height: 20px; letter-spacing: .02px; }
  .title.fade { -webkit-mask-image: linear-gradient(90deg, #000 90%, transparent 100%); mask-image: linear-gradient(90deg, #000 90%, transparent 100%); }
  .x { margin-left: 7.500px; }
  .plus { margin: 0 0 11px 17px; }
  .toolbar { height: 36px; display: flex; align-items: center; padding-left: 14px; }
  .nav { margin-right: 10px; }
  .omnibox { width: 1100px; height: 28px; border-radius: 14px; background: #f1f3f4; display: flex; align-items: center; padding: 0 11px 0 13px; font-size: 14px; color: #222; }
  .omnibox span { margin: -2px 0 0 13px; letter-spacing: -.22px; }
  .star { margin-left: auto; }
  .puzzle { margin-left: 15px; }
  .avatar { margin-left: 13px; width: 22px; height: 22px; border-radius: 50%; background: #fb0671; color: #fff; font-size: 12px; display: flex; align-items: center; justify-content: center; }
  .update { margin-left: 7px; width: 88px; height: 28px; border: 1.500px solid #ec7514; border-radius: 14px; background: #fdf3e7; color: #74706d; font-size: 13px; display: flex; align-items: center; justify-content: space-between; padding: 0 10px 0 12px; }
  .bookmarks { height: 33px; border-bottom: 1px solid #d9dbdd; display: flex; align-items: center; padding: 0 0 5px 15px; font-size: 12px; color: #5f6368; }
  .grid { display: grid; grid-template-columns: repeat(3, 3px); gap: 2px; margin-right: 10px; }
  .grid i { width: 3px; height: 3px; }

  .quizbar, .banner, article { font-family: 'Open Sans', sans-serif; color: #373a3c; }
  .quizbar { height: 73px; display: flex; align-items: center; padding: 0 30px; border-bottom: 1px solid #b5b5b5; }
  .names { margin-left: 30px; display: flex; flex-direction: column; }
  .name { font-size: 20px; line-height: 26px; }
  .meta { font-size: 12px; line-height: 18px; }
  .due { margin: -2px 0 0 auto; font-size: 14px; }
  .due b { font-weight: 700; }
  .banner { height: 96px; margin: 0 12px; background: #f1faf7; display: flex; padding-left: 212px; }
  .banner svg { margin-top: 28px; }
  .congrats { margin-left: 16px; width: 642px; display: flex; flex-direction: column; }
  .congrats strong { font-size: 24px; line-height: 30px; margin-top: 22px; }
  .congrats span { font-size: 12px; line-height: 18px; margin: 7px 0 0 2px; }
  .congrats b { margin-right: 6px; }
  button { width: 122px; height: 36px; margin-top: 32px; border: 0; border-radius: 2px; background: #2a6fd3; color: #fff; font: 600 13px 'Open Sans', sans-serif; letter-spacing: -.03px; padding: 0; }
  .grade { margin: 14px 0 0 24px; height: 68px; border-left: 1px solid #dcdfe0; padding: 10px 0 0 18px; display: flex; flex-direction: column; }
  .grade b { font-size: 12px; line-height: 16px; }
  .grade span { font-size: 24px; line-height: 26px; color: #088c56; }
  article { margin-left: 220px; width: 936px; padding-top: 45px; }
  h1 { font-size: 34px; line-height: 48px; margin: 0; font-weight: 700; white-space: nowrap; }
  .latest { font-size: 12px; line-height: 18px; margin-top: 12px; font-weight: 700; }
  .score { font-size: 24px; line-height: 32px; margin-top: 2px; height: 54px; border-bottom: 1px solid #e0e0e0; }
  .question { display: flex; margin-top: 18px; height: 24px; font-size: 16px; line-height: 24px; white-space: nowrap; }
  .num { width: 25.500px; font-size: 14px; line-height: 22px; }
  .prompt { width: 794.500px; }
  .points { width: 96px; height: 24px; border-radius: 12px; background: #757575; color: #fff; font-size: 12px; font-weight: 700; text-align: center; line-height: 23px; }
  .var { display: inline-block; width: 10.900px; text-align: center; transform: scaleX(1.15); font-family: 'Liberation Serif', serif; font-size: 19.400px; line-height: 16px; }
  .n { font-family: 'Liberation Serif', serif; font-size: 19.400px; line-height: 16px; }
  .minus { display: inline-block; width: 14.500px; text-align: center; transform: scaleX(1.3); }
  .n .minus { width: 14px; }
  .options { padding: 41px 0 0 24px; }
  .option { display: flex; align-items: center; height: 41px; }
  .radio { width: 20px; height: 20px; border: 2px solid #bdbdbd; border-radius: 50%; }
  .radio.checked { border-color: #757575; background: radial-gradient(circle, #757575 4.800px, #fff 5.300px); }
  .math { display: flex; gap: 4px; margin: 0 0 0 11px; font-family: 'Liberation Serif', serif; font-size: 20px; line-height: 24px; }
  .feedback { margin: 23px 0 0 25px; width: 795px; height: 81px; background: #f1faf7; display: flex; padding: 19px 0 0 21px; }
  .feedback div { margin: 0 0 0 11.500px; }
  .feedback b { display: block; font-size: 12px; line-height: 18px; }
  .feedback p { margin: 5px 0 0; font-size: 16px; line-height: 24px; white-space: nowrap; }
  .shade { position: absolute; inset: auto 0 0; height: 36px; background: linear-gradient(transparent, rgba(0,0,0,.065)); }

  .dock { position: absolute; left: 31px; top: 851px; width: 1378px; height: 49px; border-radius: 4px 4px 0 0; display: flex; padding: 0 3px; font-family: Inter, sans-serif; background: linear-gradient(90deg, #94776b 0, #a27768 5%, #c57c65 11%, #e58768 20%, #ea8965 25%, #c77a48 30%, #b8703b 32%, #e37a25 36%, #ef8316 42%, #ef9111 53%, #ee8712 61%, #ef9a05 74%, #f29309 80%, #ef8012 86%, #b47b28 95%, #ed8515 100%); }
  .cell { width: 39.820px; height: 49px; }
  .divider { width: 1px; height: 36px; margin: 7px 8.500px 0 9px; background: #a86a15; flex: none; }
  .mono { font-family: 'Liberation Mono', monospace; }
</style>
